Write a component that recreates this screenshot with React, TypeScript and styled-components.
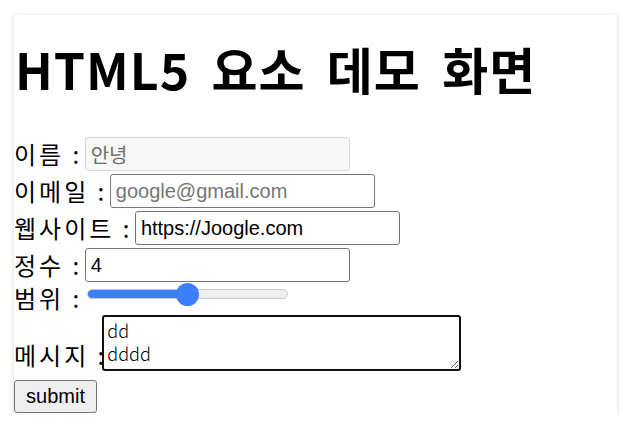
import React from 'react';
import styled, { createGlobalStyle } from 'styled-components';

const GlobalStyle = createGlobalStyle`
    body{
        margin: 0;
        background: #fff;
        font-family: "Noto Sans CJK KR", "Noto Sans", sans-serif;
        color: #000;
    }
`;

const Card = styled.div`
    display: flow-root;
    margin: 15px 0 0 14px;
    width: 603px;
    padding-bottom: 2px;
    background: #fff;
    box-shadow: 0 1px 5px rgba(0, 0, 0, 0.16);
`;

const Title = styled.h1`
    margin: 21px 0 37px 1px;
    font-size: 50px;
    line-height: 64px;
    font-weight: 700;
    letter-spacing: 1px;
    word-spacing: 9px;
    white-space: nowrap;
`;

const Form = styled.form`
    display: flex;
    flex-direction: column;
    align-items: flex-start;
    gap: 3px;
`;

const Row = styled.div<{ $align?: string; $height?: number }>`
    display: flex;
    align-items: ${p => p.$align || 'center'};
    height: ${p => (p.$height ? `${p.$height}px` : 'auto')};
`;

const Label = styled.label<{ $space?: number; $lift?: number }>`
    font-size: 24px;
    line-height: 32px;
    letter-spacing: 3px;
    white-space: pre;
    margin-right: ${p => (p.$space ?? 2.5)}px;
    margin-top: ${p => -(p.$lift ?? 0)}px;
`;

const TextInput = styled.input`
    box-sizing: border-box;
    width: 265px;
    height: 34px;
    margin: 0;
    padding: 0 5px;
    border: 1px solid #767676;
    border-radius: 3px;
    font-family: "Liberation Sans", Arial, "Noto Sans CJK KR", sans-serif;
    font-size: 20px;
    color: #000;
    background: #fff;

    &::placeholder{
        color: #757575;
    }

    &:disabled{
        border-color: #d6d6d6;
        background: #f8f8f8;
        color: #6d6d6d;
    }
`;

const Range = styled.input<{ $fill: number }>`
    -webkit-appearance: none;
    appearance: none;
    width: 201px;
    height: 24px;
    margin: -3px 0 0 2px;
    background: transparent;

    &::-webkit-slider-runnable-track{
        height: 10px;
        border-radius: 5px;
        box-sizing: border-box;
        border: 1px solid #c8c8c8;
        background: linear-gradient(to right, #3d7eff ${p => p.$fill}%, #efefef ${p => p.$fill}%);
    }

    &::-webkit-slider-thumb{
        -webkit-appearance: none;
        width: 23px;
        height: 23px;
        margin-top: -7.5px;
        border-radius: 50%;
        background: #3d7eff;
        border: none;
    }
`;

const Message = styled.textarea`
    box-sizing: border-box;
    width: 359px;
    height: 56px;
    margin: 0;
    padding: 2px 3px;
    border: 2.5px solid #111;
    border-radius: 3px;
    font-family: "Noto Sans CJK KR", sans-serif;
    font-size: 18px;
    font-weight: 300;
    line-height: 23px;
    color: #000;
    outline: none;
`;

const Submit = styled.button`
    margin-top: 6px;
    width: 83px;
    height: 33px;
    padding: 0;
    border: 1px solid #767676;
    border-radius: 3px;
    background: #efefef;
    font-family: "Liberation Sans", Arial, sans-serif;
    font-size: 20px;
    color: #000;
`;

const App = () => {
    const range = 50;

    return (
        <>
            <GlobalStyle />
            <Card>
                <Title>HTML5 요소 데모 화면</Title>
                <Form onSubmit={e => e.preventDefault()}>
                    <Row>
                        <Label>이름 :</Label>
                        <TextInput type="text" value="안녕" disabled readOnly />
                    </Row>
                    <Row>
                        <Label>이메일 :</Label>
                        <TextInput type="email" placeholder="google@gmail.com" />
                    </Row>
                    <Row>
                        <Label>웹사이트 :</Label>
                        <TextInput type="url" defaultValue="https://Joogle.com" />
                    </Row>
                    <Row>
                        <Label>정수 :</Label>
                        <TextInput type="text" defaultValue="4" />
                    </Row>
                    <Row $align="flex-start" $height={27}>
                        <Label $lift={3}>범위 :</Label>
                        <Range type="range" min={0} max={100} defaultValue={range} $fill={range} />
                    </Row>
                    <Row $align="flex-end">
                        <Label $space={-5}>메시지 :</Label>
                        <Message defaultValue={'dd\ndddd'} />
                    </Row>
                    <Submit type="submit">submit</Submit>
                </Form>
            </Card>
        </>
    );
};

export default App;
